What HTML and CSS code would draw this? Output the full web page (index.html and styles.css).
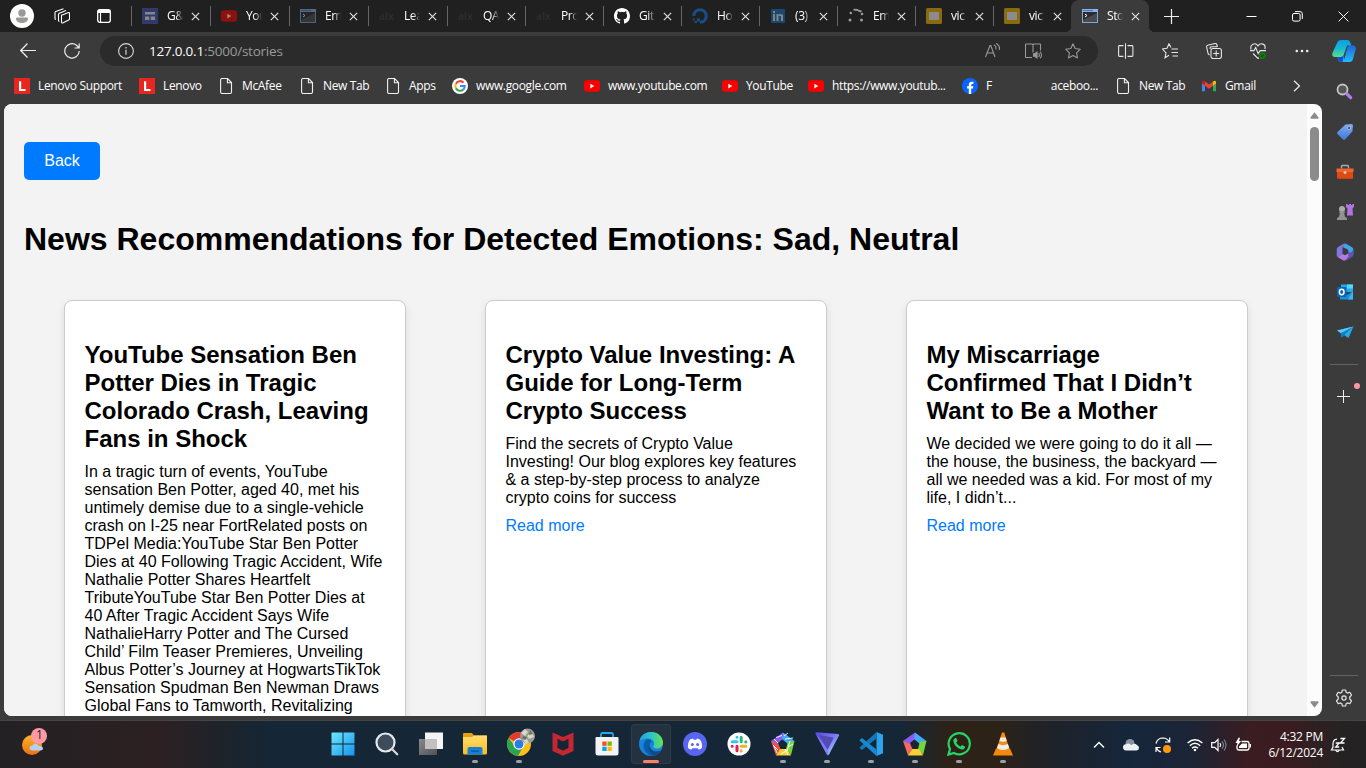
FILE: index.html
```html
<!DOCTYPE html>
<html lang="en">
<head>
<meta charset="utf-8">
<title>Stories</title>
<link rel="stylesheet" href="styles.css">
</head>
<body>
<svg class="defs" width="0" height="0">
  <defs>
    <linearGradient id="gCyan" x1="0" y1="0" x2="1" y2="1"><stop offset="0" stop-color="#6fe8fd"/><stop offset="1" stop-color="#1593ee"/></linearGradient>
    <linearGradient id="gPurple" x1="0" y1="0" x2="1" y2="1"><stop offset="0" stop-color="#5b43e0"/><stop offset=".5" stop-color="#7c7cf5"/><stop offset="1" stop-color="#a9f3ec"/></linearGradient>
    <linearGradient id="gCop1" x1="0" y1="0" x2="0" y2="1"><stop offset="0" stop-color="#0a9fe8"/><stop offset=".5" stop-color="#16b9cf"/><stop offset="1" stop-color="#5fdc86"/></linearGradient>
    <linearGradient id="gCop2" x1="0" y1="0" x2="0" y2="1"><stop offset="0" stop-color="#1f63dc"/><stop offset="1" stop-color="#22bdf8"/></linearGradient>
    <linearGradient id="gSun" x1="0" y1="0" x2="0" y2="1"><stop offset="0" stop-color="#f6b62b"/><stop offset="1" stop-color="#ee6f10"/></linearGradient>
    <linearGradient id="gTag" x1="0" y1="0" x2="0" y2="1"><stop offset="0" stop-color="#80adf2"/><stop offset="1" stop-color="#3f77d8"/></linearGradient>
    <linearGradient id="gGrey" x1="0" y1="0" x2="1" y2="1"><stop offset="0" stop-color="#8a8a8a"/><stop offset="1" stop-color="#505050"/></linearGradient>
    <linearGradient id="gEdge" x1="0" y1="0" x2="1" y2="0"><stop offset="0" stop-color="#1fa4e6"/><stop offset=".55" stop-color="#2fc7c0"/><stop offset="1" stop-color="#6be04b"/></linearGradient>
    <linearGradient id="gFolder" x1="0" y1="0" x2="0" y2="1"><stop offset="0" stop-color="#ffdd70"/><stop offset="1" stop-color="#fbbd22"/></linearGradient>
  </defs>
  <symbol id="x" viewBox="0 0 10 10"><path d="M.9.9l8.2 8.2M9.1.9L.9 9.1" stroke="#e6e6e6" stroke-width="1.2"/></symbol>
  <symbol id="page" viewBox="0 0 16 16"><path d="M2.6 2q0-1.500 1.500-1.500h5.400l4 4V14q0 1.500-1.500 1.500h-7.900q-1.500 0-1.500-1.500zM9.400.500v4.200h4.100" fill="none" stroke="#f1f1f1" stroke-width="1.100"/></symbol>
  <symbol id="yt" viewBox="0 0 16 16"><rect y="2.300" width="16" height="11.500" rx="3" fill="#f00"/><path d="M6.300 5.700v4.700l4-2.350z" fill="#fff"/></symbol>
  <symbol id="lenovo" viewBox="0 0 16 16"><path d="M0 0h16v16H0z" fill="#e8261f"/><path d="M5 3.300h2.200v7.600h4.300v2H5z" fill="#fff"/></symbol>
  <symbol id="term" viewBox="0 0 16 14"><rect x=".5" y=".5" width="15" height="13" fill="#2b2b2c" stroke="#7ea6d8"/><path d="M1 11L15 4v9H1z" fill="#4a4a4c"/><path d="M0 0h16v3H0z" fill="#86b1ea"/><path d="M1 1h10v1H1z" fill="#4a77bd"/><path d="M3 5l2 1.500L3 8" stroke="#fff" fill="none"/></symbol>
  <symbol id="slides" viewBox="0 0 16 16"><rect width="16" height="16" rx="1.500" fill="#f4b400"/><path d="M3 4h10v8H3z" fill="#f5f5f5"/></symbol>
  <symbol id="star" viewBox="0 0 16 16"><path d="M8 .8l2.200 4.700 5.100.7-3.700 3.600.9 5.200L8 12.500 3.500 15l.9-5.200L.7 6.200l5.100-.7z" fill="none" stroke="currentColor" stroke-width="1.100" stroke-linejoin="round"/></symbol>
  <symbol id="penta" viewBox="0 0 24 24"><path d="M0 9L12 .5V7L7.500 10.500 7 14z" fill="#8a5cf2"/><path d="M12 .5L23.500 9l-6 3.500L11 7z" fill="#44a9fa"/><path d="M23.500 9L20 23l-5-6 1.800-7z" fill="#72d63c"/><path d="M20 23.500H5L8.500 17H16z" fill="#f5cf35"/><path d="M5 23.500L0 9l7.200 3L9.500 17z" fill="#f26b5e"/></symbol>
</svg>

<header class="tabstrip">
  <div class="strip-tools">
    <svg class="avatar" viewBox="0 0 24 24"><circle cx="12" cy="12" r="12" fill="#fff"/><circle cx="12" cy="9" r="3.700" fill="#9b9898"/><path d="M6 14.500q0-1 1-1h10q1 0 1 1c0 6-12 6-12 0z" fill="#9b9898"/></svg>
    <svg class="i16" viewBox="0 0 16 16" fill="none" stroke="#fff" stroke-width="1.100" stroke-linejoin="round"><path d="M7.500 7.200l7-2.700q1-.2 1 .8v5.500q0 .8-.8 1.200l-6 2.900q-1.200.4-1.200-.8zM5.500 13.200q-1 .2-1-.8V6.500q0-.8.8-1.200L12 2.500M2 11.200q-1 .2-1-.8V4.700q0-.8.8-1.200L9.500.7"/></svg>
    <svg class="i14" viewBox="0 0 14 14"><rect x=".7" y=".7" width="12.600" height="12.600" rx="2" fill="none" stroke="#fff" stroke-width="1.300"/><path d="M3.500 4v9" stroke="#fff" stroke-width="1.200"/><path d="M1 1h12v3H1z" fill="#fff"/></svg>
  </div>
  <nav class="tabs">
    <div class="tab"><svg class="fav" viewBox="0 0 16 16"><path d="M0 0h16v16H0z" fill="#4355b9"/><path d="M3 4h10v2.500H3zM3 8.500h4.300V12H3zM8.700 8.500H13V12H8.700z" fill="#eee"/></svg><span>G&amp;</span><svg class="close"><use href="#x"/></svg></div>
    <div class="tab"><svg class="fav"><use href="#yt"/></svg><span>You</span><svg class="close"><use href="#x"/></svg></div>
    <div class="tab"><svg class="fav"><use href="#term"/></svg><span>Em</span><svg class="close"><use href="#x"/></svg></div>
    <div class="tab"><b class="alx">alx</b><span>Lea</span><svg class="close"><use href="#x"/></svg></div>
    <div class="tab"><b class="alx">alx</b><span>QA</span><svg class="close"><use href="#x"/></svg></div>
    <div class="tab"><b class="alx">alx</b><span>Pro</span><svg class="close"><use href="#x"/></svg></div>
    <div class="tab"><svg class="fav bright" viewBox="0 0 16 16"><path fill="#fff" d="M8 0C3.580 0 0 3.580 0 8c0 3.540 2.290 6.530 5.470 7.590.4.070.55-.17.55-.38v-1.490c-2.010.37-2.530-.49-2.690-.94-.09-.23-.48-.94-.82-1.130-.28-.15-.68-.52-.01-.53.63-.01 1.080.58 1.230.82.72 1.210 1.870.87 2.330.66.07-.52.28-.87.51-1.070-1.780-.2-3.640-.89-3.640-3.950 0-.87.31-1.590.82-2.150-.08-.2-.36-1.020.08-2.120 0 0 .67-.21 2.200.82a7.500 7.500 0 014 0c1.530-1.040 2.200-.82 2.200-.82.44 1.100.16 1.920.08 2.120.51.56.82 1.270.82 2.150 0 3.070-1.870 3.750-3.650 3.950.29.25.54.73.54 1.480v2.200c0 .21.15.46.55.38A8 8 0 0016 8c0-4.420-3.580-8-8-8z"/></svg><span>Git</span><svg class="close"><use href="#x"/></svg></div>
    <div class="tab"><svg class="fav" viewBox="0 0 16 16"><path d="M8 14.300A6.300 6.300 0 10 1.700 8" fill="none" stroke="#0b80ee" stroke-width="3"/><path d="M5 10.500h3v3H5zM2.500 13H5v2H2.500zM.5 10.500h2v2h-2z" fill="#0b80ee"/></svg><span>Ho</span><svg class="close"><use href="#x"/></svg></div>
    <div class="tab"><svg class="fav" viewBox="0 0 16 16"><rect x="1" y="1" width="14" height="14" rx="1" fill="#1272c4"/><path d="M3 6h2v7H3zM3 3h2v2H3zM6.500 6h2v1q2-2 4.500 0v6h-2V8.300q-1.200-1.200-2.500 0V13h-2z" fill="#e5e5e5"/></svg><span>(3)</span><svg class="close"><use href="#x"/></svg></div>
    <div class="tab"><svg class="fav spin" viewBox="0 0 16 16" fill="#ddd"><circle cx="2" cy="12" r="1.500"/><circle cx="2.800" cy="5" r="1.300"/><path d="M5.500.7l4.500.4v2l-4.500-.5zM10.300 1.500l3.700 1.200-1 1.800-3-1z"/><circle cx="14" cy="6" r="1.300"/><circle cx="13.500" cy="12" r="1.500"/></svg><span>Em</span><svg class="close"><use href="#x"/></svg></div>
    <div class="tab"><svg class="fav"><use href="#slides"/></svg><span>vic</span><svg class="close"><use href="#x"/></svg></div>
    <div class="tab"><svg class="fav"><use href="#slides"/></svg><span>vic</span><svg class="close"><use href="#x"/></svg></div>
    <div class="tab active"><svg class="fav"><use href="#term"/></svg><span>Sto</span><svg class="close"><use href="#x"/></svg></div>
  </nav>
  <svg class="newtab" viewBox="0 0 15 15"><path d="M7.500 0v15M0 7.500h15" stroke="#eee" stroke-width="1.200"/></svg>
  <div class="win">
    <svg viewBox="0 0 11 11"><path d="M.5 5.500h10" stroke="#fff"/></svg>
    <svg viewBox="0 0 11 11" fill="none" stroke="#fff"><rect x=".5" y="2.500" width="7.600" height="7.600" rx="1.500"/><path d="M3 .6h5q2.300 0 2.300 2.300V8"/></svg>
    <svg viewBox="0 0 11 11"><path d="M.6.6l9.800 9.800M10.400.6L.6 10.400" stroke="#fff"/></svg>
  </div>
</header>

<div class="toolbar">
  <svg class="i16" viewBox="0 0 16 16"><path d="M16 7.500H1M7.500.5L.7 7.500l6.800 7" fill="none" stroke="#eee" stroke-width="1.200"/></svg>
  <svg class="i16 reload" viewBox="0 0 16 16"><path d="M15.200 8A7.200 7.200 0 11 12.500 2.300L15 5M15.200.4V5H10.500" fill="none" stroke="#eee" stroke-width="1.200"/></svg>
  <div class="address">
    <svg class="i16" viewBox="0 0 16 16"><circle cx="8" cy="8" r="7.400" fill="none" stroke="#d8d8d8" stroke-width="1.100"/><path d="M8 6.800v5M8 4v1.400" stroke="#d8d8d8" stroke-width="1.200"/></svg>
    <p class="url"><em>127.0.0.1</em>:5000/stories</p>
    <div class="address-actions">
      <svg class="i16" viewBox="0 0 16 16" fill="none" stroke="#999" stroke-width="1.100"><path d="M.5 14L5 2.500h.8L10 14M2.200 10h6.300M9 1.800q2.500 1.500 2 4.700M11.200.3q4 2.500 3.200 6.500"/></svg>
      <svg class="i16 book" viewBox="0 0 17 16" fill="none" stroke="#999" stroke-width="1.100"><path d="M8 9.500V1.500M7 14.500H1q-.5 0-.5-.5V1.500Q.5 1 1 1h6l1 .8L9 1h6q.5 0 .5.500V7.500"/><path d="M8.500 10.700h1.300L12 9v6l-2.200-1.700H8.500z" fill="#999"/><path d="M13.700 10q1.300 2 0 4M15.300 8.700q2.300 3.300 0 6.600"/></svg>
      <svg class="i16 dim"><use href="#star"/></svg>
    </div>
  </div>
  <div class="actions">
    <svg class="i16" viewBox="0 0 16 16" fill="none" stroke="#e6e6e6" stroke-width="1.100"><path d="M7.500.3v15.400M5.500 2.600H1.500q-.9 0-.9.900v9q0 .900.900.900H5.500M9.500 2.600h4.500q.900 0 .900.900v9q0 .900-.900.900H9.500"/></svg>
    <svg class="i16" viewBox="0 0 16 16" fill="none" stroke="#e6e6e6" stroke-width="1.100"><path d="M9 4.500L7 .8l-2 4.500-4.500.7L4 9.800l-1 5 4-2.600M9.500 6H16M9.500 9.500H16M10.500 13H16"/></svg>
    <svg class="i16" viewBox="0 0 16 16" fill="none" stroke="#e6e6e6" stroke-width="1.100"><rect x="5" y="5.500" width="10.400" height="10" rx="2"/><path d="M10.200 7.500v6M7.200 10.500h6M3.500 12l-1.300-1L.6 4q-.2-1.500 1-1.800L9 .5q1.400-.2 1.800 1L11.400 4M4 6q-.3-2 1.700-2.200H11"/></svg>
    <svg class="i16" viewBox="0 0 16 16" fill="none" stroke="#e6e6e6" stroke-width="1.100"><path d="M1.200 6.500C-.8 1 5.500-1 8 3c2.500-4 8.500-2 6.800 3M0 7.600h4l1.700-3 2.500 6 2-3H16M3 10.500l5 5 1-.8"/><circle cx="12.500" cy="12.600" r="3.400" fill="#107c10" stroke="none"/><path d="M11 12.600l1 1.100 2-2.200" stroke="#074d07"/></svg>
    <svg class="i16" viewBox="0 0 16 16" fill="#eee"><circle cx="2.800" cy="8" r="1.300"/><circle cx="8" cy="8" r="1.300"/><circle cx="13.200" cy="8" r="1.300"/></svg>
    <svg class="copilot" viewBox="0 0 24 22"><path d="M5.500 2Q6.500 0 9 0h6q2.500 0 3.500 3l.8 3h-4L12 14.500q-.8 2.500-3 2.500H3Q-.5 17 .4 13z" fill="url(#gCop1)"/><path d="M18.500 22H9q-2.500 0-3-3l-.5-2H9q2 0 3-2.500L15 6q.3-.7 1.500-.7H21q3.500.7 2.700 4L21 19q-.8 3-2.500 3z" fill="url(#gCop2)"/><path d="M9 17q2 0 3-2.500L10.500 22H9q-2.500 0-3-3l-.4-2z" fill="#194ad8"/><path d="M12 14.500L15 6q.3-.8 1.300-.8h.8q-1.300.5-1.700 2L12 20z" fill="#3b3b3b"/></svg>
  </div>
</div>

<div class="middle">
  <div class="left">
    <nav class="bookmarks">
      <a><svg class="i16"><use href="#lenovo"/></svg><span>Lenovo Support</span></a>
      <a><svg class="i16"><use href="#lenovo"/></svg><span>Lenovo</span></a>
      <a><svg class="i16"><use href="#page"/></svg><span>McAfee</span></a>
      <a><svg class="i16"><use href="#page"/></svg><span>New Tab</span></a>
      <a><svg class="i16"><use href="#page"/></svg><span>Apps</span></a>
      <a><svg class="i16" viewBox="0 0 16 16"><circle cx="8" cy="8" r="8" fill="#fff"/><g fill="none" stroke-width="2.100"><path d="M11.500 4.600A4.700 4.700 0 003.900 5.700" stroke="#ea4335"/><path d="M3.900 5.700a4.800 4.800 0 000 4.600" stroke="#fbbc05"/><path d="M3.900 10.300a4.700 4.700 0 007.500 1.100" stroke="#34a853"/><path d="M11.400 11.400A4.500 4.500 0 0012.700 8H8" stroke="#4285f4"/></g></svg><span>www.google.com</span></a>
      <a><svg class="i16"><use href="#yt"/></svg><span>www.youtube.com</span></a>
      <a><svg class="i16"><use href="#yt"/></svg><span>YouTube</span></a>
      <a><svg class="i16"><use href="#yt"/></svg><span>https://www.youtub...</span></a>
      <a><svg class="i16" viewBox="0 0 16 16"><circle cx="8" cy="8" r="8" fill="#0866ff"/><path d="M6.800 16v-5.400H5V8.200h1.800V7q0-3.300 3.200-3.300l1.400.1v2.100h-1q-1.200 0-1.200 1.100v1.200h2.200l-.4 2.400H9.200V16z" fill="#fff"/></svg><span class="fb">F<i>aceboo...</i></span></a>
      <a><svg class="i16"><use href="#page"/></svg><span>New Tab</span></a>
      <a><svg class="i16" viewBox="0 0 16 16"><path d="M1 4v9.300h3V7z" fill="#4285f4"/><path d="M15 4v9.300h-3V7z" fill="#34a853"/><path d="M4 3.500l4 3 4-3v4.200l-4 3-4-3z" fill="#ea4335"/><path d="M1 4q.5-2 3-.5v4.200L1 5.500z" fill="#c5221f"/><path d="M15 4q-.5-2-3-.5v4.200l3-2.200z" fill="#fbbc04"/></svg><span>Gmail</span></a>
      <a><svg class="chev" viewBox="0 0 8 12"><path d="M1 .8L6.500 6 1 11.200" fill="none" stroke="#eee" stroke-width="1.200"/></svg></a>
    </nav>
    <div class="viewport">
      <main class="content">
        <a class="back">Back</a>
        <h1>News Recommendations for Detected Emotions: Sad, Neutral</h1>
        <section class="stories">
          <article class="card">
            <h2>YouTube Sensation Ben<br>Potter Dies in Tragic<br>Colorado Crash, Leaving<br>Fans in Shock</h2>
            <p>In a tragic turn of events, YouTube<br>sensation Ben Potter, aged 40, met his<br>untimely demise due to a single-vehicle<br>crash on I-25 near FortRelated posts on<br>TDPel Media:YouTube Star Ben Potter<br>Dies at 40 Following Tragic Accident, Wife<br>Nathalie Potter Shares Heartfelt<br>TributeYouTube Star Ben Potter Dies at<br>40 After Tragic Accident Says Wife<br>NathalieHarry Potter and The Cursed<br>Child’ Film Teaser Premieres, Unveiling<br>Albus Potter’s Journey at HogwartsTikTok<br>Sensation Spudman Ben Newman Draws<br>Global Fans to Tamworth, Revitalizing</p>
          </article>
          <article class="card">
            <h2>Crypto Value Investing: A<br>Guide for Long-Term<br>Crypto Success</h2>
            <p>Find the secrets of Crypto Value<br>Investing! Our blog explores key features<br>&amp; a step-by-step process to analyze<br>crypto coins for success</p>
            <a class="more">Read more</a>
          </article>
          <article class="card">
            <h2>My Miscarriage<br>Confirmed That I Didn’t<br>Want to Be a Mother</h2>
            <p>We decided we were going to do it all —<br>the house, the business, the backyard —<br>all we needed was a kid. For most of my<br>life, I didn’t...</p>
            <a class="more">Read more</a>
          </article>
        </section>
      </main>
      <div class="scrollbar">
        <svg viewBox="0 0 9 7"><path d="M4.500.3L8.500 5.500q.3 1.200-.7 1.200H1.200Q.2 6.700.5 5.500z" fill="#8b8b8b"/></svg>
        <div class="thumb"></div>
        <svg class="down" viewBox="0 0 9 7"><path d="M4.500 6.700L8.500 1.500Q8.800.3 7.800.3H1.200Q.2.3.5 1.500z" fill="#8b8b8b"/></svg>
      </div>
    </div>
  </div>
  <aside class="sidebar">
    <div class="side-item find"><svg viewBox="0 0 18 18"><circle cx="7.500" cy="7.500" r="5" fill="#555" stroke="#c4c4c4" stroke-width="1.800"/><path d="M12 12l3.700 3.700" stroke="#b27be8" stroke-width="3.200" stroke-linecap="round"/></svg></div>
    <div class="side-item"><svg viewBox="0 0 18 18"><path d="M9.500 1.500L15.500 1q1.500 0 1.500 1.500l-.6 6L9 16.500q-1 1-2 0L1.500 11q-1-1 0-2z" fill="url(#gTag)"/><circle cx="13" cy="5" r="1.500" fill="#333" stroke="#cce" stroke-width=".8"/></svg></div>
    <div class="side-item"><svg viewBox="0 0 18 18"><path d="M5.500 5.500V3.500q0-1 1-1h5q1 0 1 1v2" fill="none" stroke="#aaa" stroke-width="1.400"/><path d="M.5 5.500h17v3.500H.5z" fill="#f1642c"/><path d="M1 9h16v6q0 .8-.8.800H1.800q-.8 0-.8-.8z" fill="#e04a10"/><circle cx="9" cy="9.500" r="1.500" fill="#ccc"/></svg></div>
    <div class="side-item"><svg viewBox="0 0 18 18"><path d="M10 1h1.700v1h1.300V1h2v1h1.300V1H18v3l-1.500 1.500.5 7H11l.5-7L10 4z" fill="#b173df"/><circle cx="6" cy="6" r="3" fill="#aaa"/><path d="M3 8.500h6v1.200H8l1 4 2 1.600V17H1v-1.700l2-1.600 1-4H3z" fill="#929292"/></svg></div>
    <div class="side-item"><svg viewBox="0 0 18 18"><path d="M7.500.8q1.500-.8 3 0L6.500 4v7L1.500 14Q.7 13.500.7 12V6.500Q.7 5 2 4z" fill="#8077de"/><path d="M10 .8l6 3.400q1.300.8 1.300 2.300V12l-5-2.500V6.700L6.500 4z" fill="#3fa6ee"/><path d="M17.300 6.500V12q0 1.200-1.300 2l-5.500 3.200q-1.500.8-3 0l5-3.500V9q3 1.500 4.800-2.500z" fill="#6251b9"/><path d="M1.500 14l5-3 2.500 1.300 3.500-2v3.400L9 17.200q-1 .6-2 0z" fill="#b47ce2"/></svg></div>
    <div class="side-item"><svg viewBox="0 0 18 18"><path d="M5 1.500h12V9H5z" fill="#28a8ea"/><path d="M11 1.500h6v4h-6z" fill="#50d9ff"/><path d="M4 8l7 4 6-4v8.500H4z" fill="#1490df"/><path d="M17 8v8.500h-5z" fill="#35b8f1"/><rect x="1" y="4" width="9.500" height="10" rx="1" fill="#0a65b8"/><ellipse cx="5.700" cy="9" rx="2.300" ry="2.700" fill="none" stroke="#fff" stroke-width="1.500"/></svg></div>
    <div class="side-item"><svg viewBox="0 0 18 18"><path d="M1 7.500L17.500 3.500 12.500 15 8 12l-2.500 2.500-.8-4.200z" fill="#27a9e8"/><path d="M4.700 10.300L17.500 3.500 8 12l-2.500 2.500z" fill="#137bc0"/><path d="M1 7.500l16.500-4L5 10z" fill="#54cbf6"/></svg></div>
    <div class="rule first"></div>
    <div class="plus"><svg viewBox="0 0 13 13"><path d="M6.500 0v13M0 6.500h13" stroke="#eee"/></svg><i></i></div>
    <div class="rule second"></div>
    <svg class="gear" viewBox="0 0 18 18" fill="none" stroke="#e5e5e5" stroke-width="1.200" stroke-linejoin="round"><path d="M7.400 1h3.200l.6 2.300 1.300.8 2.300-.8 1.700 2.800L14.800 8v2l1.700 1.900-1.700 2.800-2.300-.8-1.300.8-.6 2.300H7.400l-.6-2.300-1.300-.8-2.300.8-1.700-2.800L3.200 10V8L1.500 6.100l1.700-2.800 2.300.8 1.300-.8z"/><circle cx="9" cy="9" r="2.100"/></svg>
  </aside>
</div>

<footer class="taskbar">
  <div class="widget"><svg viewBox="0 0 28 28"><circle cx="11" cy="17" r="10" fill="url(#gSun)"/><path d="M12 22.500q-4-.3-3.500-3 .5-2 3-2 1-2.500 4-1.500l3 2q3.500 0 3.500 2.500 0 2-2.500 2z" fill="#b7cff5"/><circle cx="18" cy="8" r="8" fill="#ff99a4"/></svg><b>1</b></div>
  <nav class="apps">
    <div class="app"><svg viewBox="0 0 24 24" fill="url(#gCyan)"><path d="M.5 1q0-.5.500-.5h22q.5 0 .5.500v22q0 .5-.5.500H1q-.5 0-.5-.500z"/><path d="M11.500 0h1v24h-1zM0 11.500h24v1H0z" fill="#152636"/></svg></div>
    <div class="app"><svg viewBox="0 0 24 24"><circle cx="10.500" cy="10.500" r="9" fill="#3c4c5b" stroke="#e6e7ea" stroke-width="2.200"/><path d="M17.200 17.200l5 5" stroke="#d5d7dc" stroke-width="2.300" stroke-linecap="round"/></svg></div>
    <div class="app"><svg viewBox="0 0 24 24"><path d="M6 .5h18V17H6z" fill="#f4f4f4"/><path d="M0 7h18v16H0z" fill="url(#gGrey)"/><path d="M6 7h12v10H6z" fill="#c1c1c1"/></svg></div>
    <div class="app run"><svg viewBox="0 0 24 24"><path d="M0 2q0-1 1-1h8l2 2.500h12q1 0 1 1V10H0z" fill="#e3a10c"/><path d="M0 5h9l2-1.500h13V21q0 1.500-1.500 1.500h-21Q0 22.500 0 21z" fill="url(#gFolder)"/><path d="M4.500 22.500V17q0-2 2-2h11q2 0 2 2v5.500z" fill="#1680d3"/><path d="M8 18.500h8v1.200H8z" fill="#075595"/></svg></div>
    <div class="app run"><svg viewBox="0 0 28 28"><g transform="translate(0 4)"><circle cx="12" cy="12" r="12" fill="#fbc116"/><path d="M12 12L1.600 6A12 12 0 0122.400 6z" fill="#e33b2e"/><path d="M1.600 6A12 12 0 0011 24l5.200-9.500L8 14.300z" fill="#2da44e"/><circle cx="12" cy="12" r="5.700" fill="#fff"/><circle cx="12" cy="12" r="4.500" fill="#287de8"/></g><circle cx="20.500" cy="8" r="7.500" fill="#9a9b8e"/><path d="M14 5l4-4 3 3-3 4zM20 8l5-4 2 5-5 2zM16 12l4-1 2 4-3 1z" fill="#d6d6cb"/><path d="M17 8l3 1-2 3-3-2zM23 2l3 4-4 1z" fill="#6c7065"/></svg></div>
    <div class="app"><svg viewBox="0 0 24 24"><path d="M1.500.5L12 5l10.500-4.500V19L12 23.800 1.500 19zM6.500 6.800V16L12 18.500 17.500 16V6.800L12 9.500z" fill="#c4272f" fill-rule="evenodd"/></svg></div>
    <div class="app"><svg viewBox="0 0 24 24"><path d="M6 6V2.500Q6 1 7.500 1h9Q18 1 18 2.500V6" fill="none" stroke="#22a7f0" stroke-width="1.800"/><path d="M.5 6q0-1 1-1h21q1 0 1 1v15q0 2.500-2.500 2.500H3Q.5 23.500.5 21z" fill="#f3f3f3"/><path d="M7.300 9.500h4.300v4.300H7.300z" fill="#f25022"/><path d="M12.500 9.500h4.300v4.300h-4.300z" fill="#7fba00"/><path d="M7.300 14.700h4.300V19H7.300z" fill="#00a4ef"/><path d="M12.500 14.700h4.300V19h-4.300z" fill="#ffb900"/></svg></div>
    <div class="app current"><svg viewBox="0 0 24 24"><circle cx="12" cy="12" r="12" fill="#1684d8"/><path d="M.4 9C2.200 2.500 7 0 12 0c7 0 12 5 12 10.500 0 4-3.500 6-6.500 6-2.500 0-4-1-3.200-2.200C17 10 13 6.500 9 6.500 5 6.500 1.500 8 .4 9z" fill="url(#gEdge)"/><path d="M9 7c-6 1.500-7 13 3.500 17 4 .3 8-2.200 10-5.500-6 3-13-.5-12-6 .3-1.500 1.500-2.500 2.500-3Q11.500 7 9 7z" fill="#0c5cab"/><path d="M11 11q-2 5 3.500 8 4 1.500 8.500-1-5 7-9 5-7-5-3-12z" fill="#114a8c"/></svg></div>
    <div class="app"><svg viewBox="0 0 24 24"><circle cx="12" cy="12" r="12" fill="#5865f2"/><path d="M5 16Q4.500 11 7 7.500l3-1 .7 1.200h2.600L14 6.500l3 1Q19.500 11 19 16q-2 1.500-3.500 1.500l-.8-1.300H9.300L8.500 17.500Q7 17.500 5 16z" fill="#fff"/><circle cx="9.400" cy="12.500" r="1.500" fill="#5865f2"/><circle cx="14.600" cy="12.500" r="1.500" fill="#5865f2"/></svg></div>
    <div class="app"><svg viewBox="0 0 24 24"><circle cx="12" cy="12" r="11.500" fill="#fff"/><g stroke-width="3" stroke-linecap="round"><path d="M10 9.800H5.200M10 5.200v.1" stroke="#36c5f0"/><path d="M14.200 5.200v4.600M18.800 9.800v.1" stroke="#2eb67d"/><path d="M14.200 14.200h4.600M14.200 18.800v.1" stroke="#ecb22e"/><path d="M10 14.200v4.600M5.200 14.200v.1" stroke="#e01e5a"/></g></svg></div>
    <div class="app run"><svg viewBox="0 0 24 24"><use href="#penta"/><path d="M1 10l6 2 2 5-4 5z" fill="#ef4336" opacity=".7"/><path d="M3 7l4 4M5 5.500l6-2M13 4l4-3M14 7l8-1M19 9l-3 10M22 12l-5 3M17 18l-7 4M14 17l3 6M6 21l-3-7M2 13l5 5" stroke="#fff" stroke-width=".9"/></svg></div>
    <div class="app run"><svg viewBox="0 0 24 24"><path d="M.5 1.500q-.5-1.300 1-1.300L23 2q1.500.2 1 1.500L14 22.500q-1 1.500-2 0z" fill="url(#gPurple)"/><path d="M3.500 3l14 2.200q1.300.2.700 1.500L12.500 18z" fill="#544ab6"/><path d="M.5 1.500L12.500 18l1 5q-1 .5-1.700-.7z" fill="#827bfa"/></svg></div>
    <div class="app run"><svg viewBox="0 0 24 24"><path d="M17.500 0L24 2.700v18.600L17.500 24z" fill="#2ba3ed"/><path d="M17.500 0v6.500L3 18 .3 15.700z" fill="#1576b9"/><path d="M17.500 24v-6.500L3 6 .3 8.300z" fill="#1689d0"/></svg></div>
    <div class="app run"><svg viewBox="0 0 24 24"><use href="#penta"/></svg></div>
    <div class="app run"><svg viewBox="0 0 24 24"><path d="M1.400 22.600L3 17A10.600 10.600 0 1 1 7 21z" fill="none" stroke="#25d366" stroke-width="2.200"/><path d="M8 6l1.300.1L10.500 9l-1.200 1.700q1.500 2.700 4.200 3.700l1.500-1.500 3 1.500q-.3 3.500-3.600 3.200Q7.500 15.500 6.300 9 6.500 7 8 6z" fill="#25d366"/></svg></div>
    <div class="app run"><svg viewBox="0 0 24 24"><path d="M5 16.500L2 23.500h20l-3-7z" fill="#f48a0b"/><path d="M11 .5h2.200L18.500 17q-6.500 5-13 0z" fill="#f58b13"/><path d="M9.500 5.500h5.200l1 3.500q-3.700 1.500-7.300 0zM7.300 12q4.700 2.300 9.600 0l1.300 4q-6.200 4-12.200 0z" fill="#eee"/></svg></div>
  </nav>
  <div class="tray">
    <svg class="i16" viewBox="0 0 16 16"><path d="M3 10.500l5-5 5 5" fill="none" stroke="#fff" stroke-width="1.400"/></svg>
    <svg class="i16" viewBox="0 0 16 16"><circle cx="7" cy="6.500" r="4.500" fill="#8a929b"/><path d="M3 13.500Q0 13 0 10.200 0 7.500 3 7.300q3-2 5.500 1Q11 5.500 14 8q2 .8 2 3t-2.500 2.500z" fill="#eef1f4"/></svg>
    <svg class="i16" viewBox="0 0 16 16" fill="none" stroke="#fff" stroke-width="1.200"><path d="M1 6.500Q2.500 1 8 1q4.500.2 6.500 4M14.700.5V5H10M6 15q-3.500-1-4.700-4.500M1 15v-4.500h4.500"/><circle cx="12" cy="12" r="4" fill="#ff980f" stroke="none"/></svg>
    <svg class="i16" viewBox="0 0 16 16" fill="none" stroke="#fff" stroke-width="1.400"><path d="M.6 6q7.400-6.500 14.800 0M2.800 8.700q5.200-4.700 10.400 0M5 11.300q3-2.500 6 0"/><circle cx="8" cy="13" r="1.300" fill="#fff" stroke="none"/></svg>
    <svg class="i16" viewBox="0 0 16 16" fill="none" stroke="#fff" stroke-width="1.200"><path d="M.7 5.700h3L7 2.500v11l-3.300-3.200h-3zM9 6q1.300 2 0 4"/><path d="M11 4.300q3 3.700 0 7.400M13 2.500q4 5.500 0 11" stroke="#7b7f88"/></svg>
    <svg class="i16" viewBox="0 0 16 16"><path d="M6.500 4.500H12q2 0 2 2V11q0 2-2 2H4q-2 0-2-2V8.500" fill="none" stroke="#fff" stroke-width="1.300"/><path d="M7 6.500h5v4.500H4V9.500zM14.500 7H16v3.500h-1.500zM3.500.8L.5 6h2l-1 4L6 4H4L5 .8z" fill="#fff"/></svg>
  </div>
  <div class="clock">4:32 PM<br>6/12/2024</div>
  <svg class="bell" viewBox="0 0 16 16"><path d="M7 2.200Q3 2.500 3 7v3L1.500 13h12L12 10M5.800 13.200q1.700 3 3.500 0" fill="none" stroke="#fff" stroke-width="1.200"/><path d="M5.700 6h3.500L5.700 10h3.500M10.500 1.500h4L10.500 6h4" fill="none" stroke="#fff" stroke-width="1.300"/></svg>
</footer>
</body>
</html>
```
FILE: styles.css
```css
* { box-sizing: border-box; }
body {
  margin: 0;
  width: 1366px;
  height: 768px;
  overflow: hidden;
  display: flex;
  flex-direction: column;
  background: #3b3b3b;
  color: #fff;
  font: 12px "Open Sans", "Noto Sans", sans-serif;
}
svg { display: block; flex: none; }
.defs { position: absolute; }
.i16 { width: 16px; height: 16px; }
.i14 { width: 14px; height: 14px; }

/* Tab strip */
.tabstrip { height: 32px; flex: none; display: flex; align-items: center; background: #202020; }
.strip-tools { width: 131px; display: flex; align-items: center; padding-left: 10px; }
.avatar { width: 24px; height: 24px; margin-right: 20px; }
.strip-tools .i14 { margin-left: 27px; }
.tabs { display: grid; grid-template-columns: repeat(4, 79px) repeat(9, 78px); height: 32px; }
.tab { display: flex; align-items: center; position: relative; padding-left: 11px; }
.tab::before { content: ""; position: absolute; left: 0; top: 6px; width: 1px; height: 20px; background: #666; }
.fav { width: 16px; height: 16px; opacity: .5; }
.fav.bright, .active .fav { opacity: 1; }
.fav.spin { opacity: .65; }
.alx { width: 16px; color: #2c2c2c; font: bold 10px/16px "Open Sans", sans-serif; }
.tab span {
  width: 20px; margin-left: 9px; white-space: nowrap;
  font-size: 12px; letter-spacing: -.4px; line-height: 18px;
  -webkit-mask-image: linear-gradient(90deg, #000 45%, transparent 80%);
  mask-image: linear-gradient(90deg, #000 45%, transparent 80%);
}
.close { width: 9px; height: 9px; margin-left: 4px; }
.tab.active { background: #3b3b3b; border-radius: 8px 8px 0 0; }
.tab.active::before, .tab.active::after {
  content: ""; position: absolute; left: -6px; top: 26px; width: 6px; height: 6px;
  background: radial-gradient(circle at 0 0, transparent 6px, #3b3b3b 6.500px);
}
.tab.active::after { left: auto; right: -6px; background: radial-gradient(circle at 100% 0, transparent 6px, #3b3b3b 6.500px); }
.newtab { width: 15px; height: 15px; margin-left: 15px; }
.win { display: flex; gap: 35px; margin-left: 67px; }
.win svg { width: 11px; height: 11px; }

/* Navigation bar */
.toolbar { height: 36px; flex: none; display: flex; align-items: center; padding: 2px 0 0 20px; }
.reload { margin: 0 20px 0 28px; }
.address { width: 998px; height: 30px; border-radius: 15px; background: #2b2b2b; display: flex; align-items: center; padding: 0 17px 0 18px; }
.url { margin: 0 0 0 15px; color: #9b9b9b; font-size: 13.5px; line-height: 20px; letter-spacing: -.23px; }
.url em { color: #fff; font-style: normal; }
.address-actions { margin-left: auto; display: flex; gap: 24px; }
.book { width: 17px; margin-right: -1px; }
.dim { color: #999; }
.actions { display: flex; align-items: center; gap: 28px; padding-left: 20px; }
.copilot { width: 24px; height: 22px; margin-left: -6px; }

/* Bookmarks */
.middle { flex: 1; display: flex; min-height: 0; }
.left { width: 1322px; display: flex; flex-direction: column; }
.bookmarks {
  height: 36px; flex: none; padding-left: 14px; display: grid; align-items: center;
  grid-template-columns: 125px 79px 81px 86px 67px 132px 138px 86px 154px 153px 86px 91px 20px;
}
.bookmarks a { display: flex; align-items: center; gap: 8px; white-space: nowrap; letter-spacing: -.35px; }
.bookmarks span { margin-top: -1px; }
.fb i { font-style: normal; margin-left: 59px; }
.chev { width: 8px; height: 12px; margin-left: 1px; }

/* Page */
.viewport { flex: 1; min-height: 0; margin: 0 0 4px 4px; display: flex; border-radius: 8px; overflow: hidden; background: #fcfcfc; }
.content { width: 1303px; padding: 38px 20px 0; background: #f3f3f3; color: #000; font: 16px/18px "Liberation Sans", Arial, sans-serif; overflow: hidden; }
.back { display: block; width: 76px; height: 38px; border-radius: 5px; background: #007bff; color: #fff; text-align: center; line-height: 37px; }
.content h1 { margin: 41px 0 43px; font-size: 32px; line-height: 36px; white-space: nowrap; }
.stories { display: flex; gap: 79px; padding-left: 40px; }
.card { width: 342px; height: 540px; flex: none; padding: 20px 20px 20px 19.500px; background: #fff; border: 1px solid #ccc; border-radius: 8px; box-shadow: 0 4px 8px rgba(0,0,0,.1); white-space: nowrap; }
.card h2 { margin: 20px 0 10px; font-size: 24px; line-height: 28px; }
.card p { margin: 0 0 10px; }
.more { color: #007bff; }
.scrollbar { width: 15px; display: flex; flex-direction: column; align-items: center; padding: 8px 0; }
.scrollbar svg { width: 9px; height: 7px; }
.thumb { width: 9px; height: 54px; margin-top: 8px; border-radius: 5px; background: #8b8b8b; }
.scrollbar .down { margin-top: auto; }

/* Sidebar */
.sidebar { width: 44px; display: flex; flex-direction: column; align-items: center; padding-top: 4px; }
.side-item { height: 40px; flex: none; display: flex; align-items: center; padding-left: 1px; }
.side-item svg { width: 18px; height: 18px; }
.find { padding: 0 0 2px; }
.rule { width: 28px; height: 1px; background: #626262; flex: none; }
.rule.first { margin-top: 12px; }
.plus { width: 44px; height: 62px; display: flex; align-items: center; justify-content: center; position: relative; padding-right: 1px; }
.plus svg { width: 13px; height: 13px; margin-top: 1px; }
.plus i { position: absolute; left: 32px; top: 18px; width: 6px; height: 6px; border-radius: 50%; background: #ff99a0; }
.rule.second { margin-top: 248px; }
.gear { width: 18px; height: 18px; margin-top: 13px; }

/* Taskbar */
.taskbar {
  height: 48px; flex: none; display: flex; align-items: center; border-top: 1px solid #444;
  background: linear-gradient(90deg, #232124 0, #292022 100px, #2c2023 160px, #1f2329 215px, #152636 270px, #152636 900px, #2e2217 950px, #2c2218 1000px, #202226 1040px, #15263b 1130px, #1b2436 1190px, #3b1c20 1250px, #3a1c20 1285px, #262223 1340px, #232223);
}
.widget { width: 321px; flex: none; padding-left: 21px; position: relative; }
.widget svg { width: 28px; height: 28px; margin-top: -6px; }
.widget b { position: absolute; left: 36px; top: -7px; color: #222; font-weight: 400; font-size: 12px; line-height: 16px; }
.apps { display: grid; grid-template-columns: repeat(16, 44px); margin-top: -1px; }
.app { width: 40px; height: 40px; margin-left: 2px; border-radius: 4px; display: flex; align-items: center; justify-content: center; position: relative; left: -.5px; }
.app svg { width: 24px; height: 24px; }
.app svg[viewBox="0 0 28 28"] { width: 28px; height: 28px; margin: -4px -4px 0 0; }
.run::after, .current::after { content: ""; position: absolute; left: 17px; bottom: 1px; width: 6px; height: 3px; border-radius: 2px; background: #9aa2a9; }
.current { background: #24323f; box-shadow: inset 0 0 0 1px #2f3b47; }
.current::after { left: 12px; width: 16px; background: #ff8068; }
.tray { display: grid; grid-template-columns: 32px 32px 32px 24px 24px 24px; padding-left: 66px; }
.clock { width: 64px; text-align: right; line-height: 16px; letter-spacing: -.25px; }
.bell { width: 16px; height: 16px; margin-left: 7px; }
```
